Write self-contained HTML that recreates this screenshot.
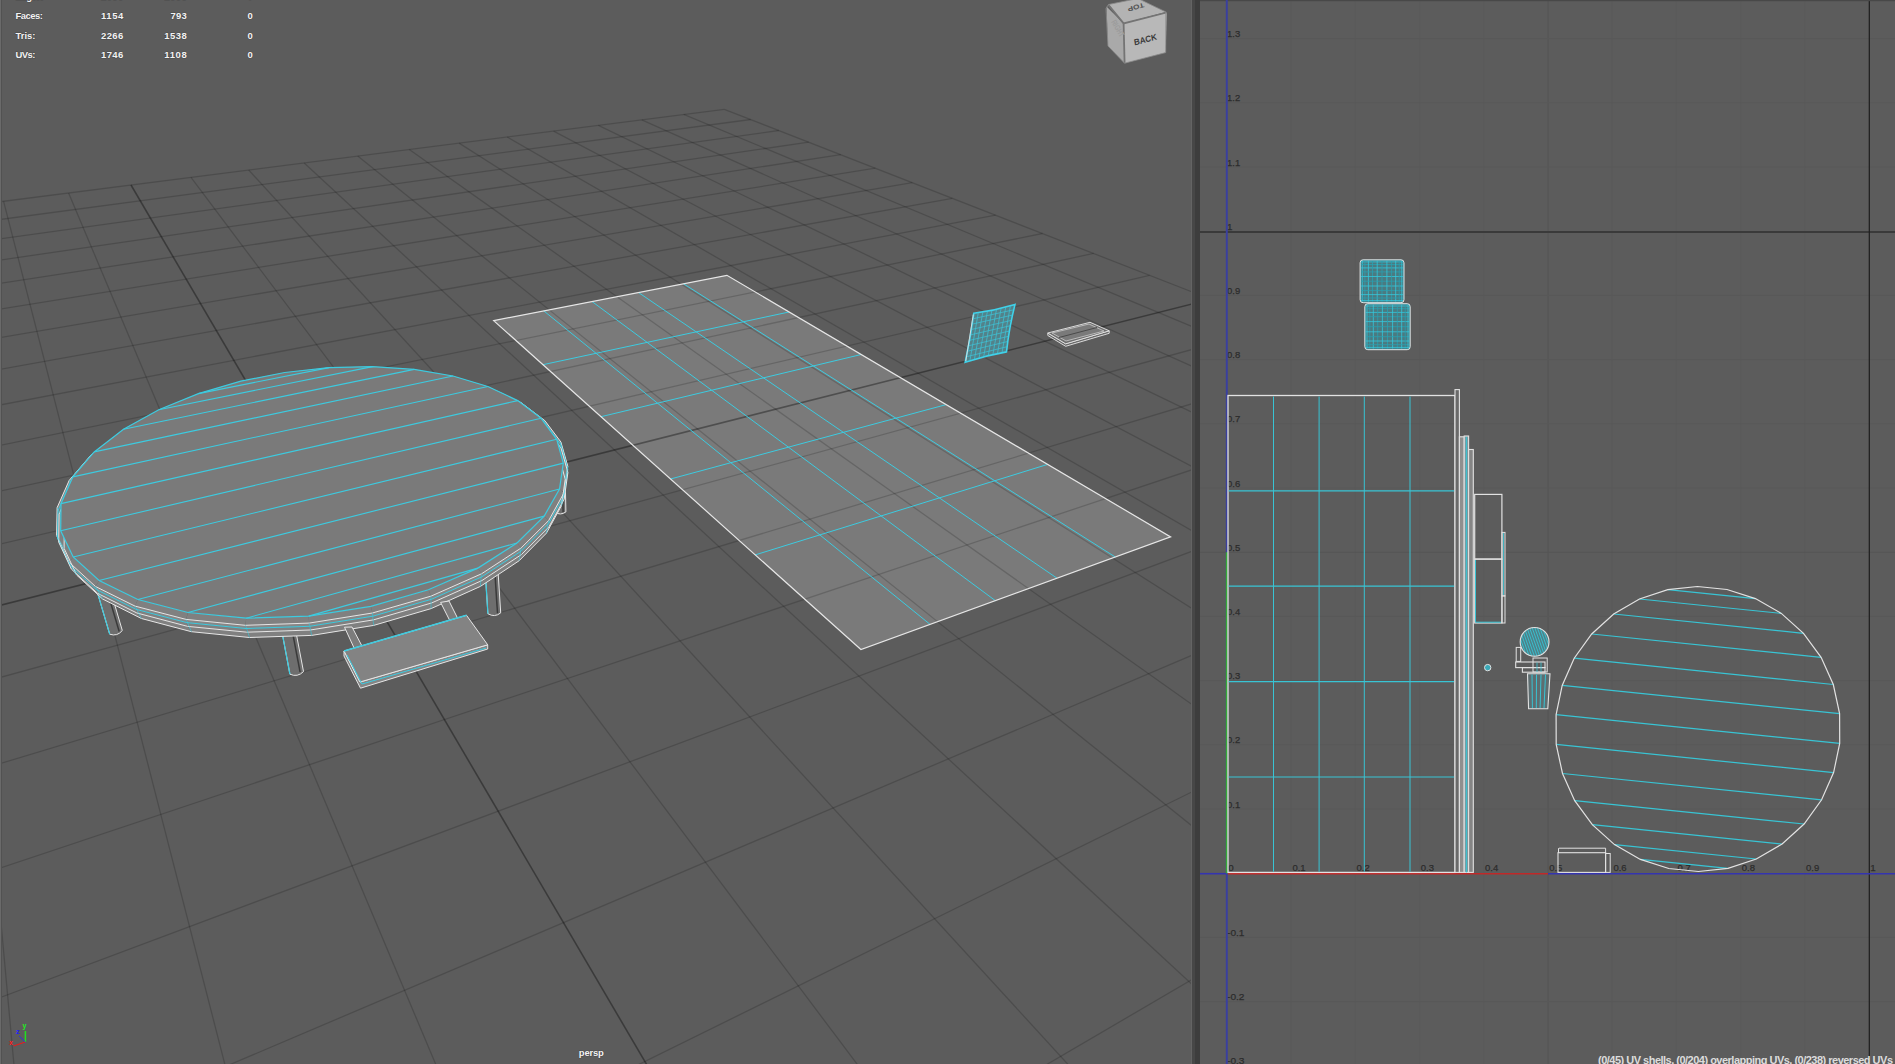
<!DOCTYPE html><html><head><meta charset="utf-8"><style>html,body{margin:0;padding:0;background:#5c5c5c;}body{width:1895px;height:1064px;overflow:hidden;position:relative;}svg{display:block;position:absolute;left:0;top:0;}text{font-family:"Liberation Sans",sans-serif;}</style></head><body>
<svg width="1895" height="1064" viewBox="0 0 1895 1064" shape-rendering="geometricPrecision">
<defs><clipPath id="vp"><rect x="0" y="0" width="1192" height="1064"/></clipPath><clipPath id="uv"><rect x="1200" y="0" width="695" height="1064"/></clipPath></defs>
<rect x="0" y="0" width="1192" height="1064" fill="#5c5c5c"/>
<g clip-path="url(#vp)">
<polygon points="493.7,320.6 726.9,275.3 1170.6,536.9 860.9,649.5" fill="#7a7a7a" stroke="none" stroke-width="1" />
<line x1="724.3" y1="109.3" x2="-831.4" y2="307.9" stroke="rgba(0,0,0,0.17)" stroke-width="1.3" />
<line x1="724.3" y1="109.3" x2="3087.2" y2="1031.9" stroke="rgba(0,0,0,0.17)" stroke-width="1.3" />
<line x1="750.7" y1="119.5" x2="-869.8" y2="335.4" stroke="rgba(0,0,0,0.17)" stroke-width="1.3" />
<line x1="683.7" y1="114.4" x2="3078.1" y2="1113.4" stroke="rgba(0,0,0,0.17)" stroke-width="1.3" />
<line x1="778.8" y1="130.5" x2="-912.5" y2="366.0" stroke="rgba(0,0,0,0.17)" stroke-width="1.3" />
<line x1="641.8" y1="119.8" x2="3067.7" y2="1206.4" stroke="rgba(0,0,0,0.17)" stroke-width="1.3" />
<line x1="808.7" y1="142.2" x2="-960.2" y2="400.1" stroke="rgba(0,0,0,0.17)" stroke-width="1.3" />
<line x1="598.4" y1="125.3" x2="3055.8" y2="1313.5" stroke="rgba(0,0,0,0.17)" stroke-width="1.3" />
<line x1="840.8" y1="154.7" x2="-1013.9" y2="438.5" stroke="rgba(0,0,0,0.17)" stroke-width="1.3" />
<line x1="553.6" y1="131.1" x2="3041.9" y2="1438.1" stroke="rgba(0,0,0,0.17)" stroke-width="1.3" />
<line x1="875.3" y1="168.2" x2="-1074.7" y2="482.1" stroke="rgba(0,0,0,0.17)" stroke-width="1.3" />
<line x1="507.2" y1="137.0" x2="3025.5" y2="1584.9" stroke="rgba(0,0,0,0.17)" stroke-width="1.3" />
<line x1="912.3" y1="182.7" x2="-1144.2" y2="531.9" stroke="rgba(0,0,0,0.17)" stroke-width="1.3" />
<line x1="459.1" y1="143.1" x2="3005.9" y2="1760.4" stroke="rgba(0,0,0,0.17)" stroke-width="1.3" />
<line x1="952.3" y1="198.3" x2="-1224.5" y2="589.3" stroke="rgba(0,0,0,0.17)" stroke-width="1.3" />
<line x1="409.3" y1="149.5" x2="2982.1" y2="1974.0" stroke="rgba(0,0,0,0.17)" stroke-width="1.3" />
<line x1="995.5" y1="215.1" x2="-1318.1" y2="656.4" stroke="rgba(0,0,0,0.17)" stroke-width="1.3" />
<line x1="357.7" y1="156.1" x2="2952.5" y2="2239.4" stroke="rgba(0,0,0,0.17)" stroke-width="1.3" />
<line x1="1042.5" y1="233.5" x2="-1428.9" y2="735.6" stroke="rgba(0,0,0,0.17)" stroke-width="1.3" />
<line x1="304.2" y1="162.9" x2="2914.7" y2="2578.3" stroke="rgba(0,0,0,0.17)" stroke-width="1.3" />
<line x1="1093.6" y1="253.4" x2="-1561.8" y2="830.8" stroke="rgba(0,0,0,0.17)" stroke-width="1.3" />
<line x1="248.7" y1="170.0" x2="2864.8" y2="3025.9" stroke="rgba(0,0,0,0.17)" stroke-width="1.3" />
<line x1="1149.5" y1="275.3" x2="-1724.3" y2="947.2" stroke="rgba(0,0,0,0.17)" stroke-width="1.3" />
<line x1="191.0" y1="177.4" x2="2795.7" y2="3644.8" stroke="rgba(0,0,0,0.17)" stroke-width="1.3" />
<line x1="1210.9" y1="299.2" x2="-1927.6" y2="1092.7" stroke="rgba(0,0,0,0.36)" stroke-width="1.6" />
<line x1="131.0" y1="185.0" x2="2694.0" y2="4556.5" stroke="rgba(0,0,0,0.36)" stroke-width="1.6" />
<line x1="1278.6" y1="325.7" x2="-2189.1" y2="1279.9" stroke="rgba(0,0,0,0.17)" stroke-width="1.3" />
<line x1="68.6" y1="193.0" x2="2529.3" y2="6032.9" stroke="rgba(0,0,0,0.17)" stroke-width="1.3" />
<line x1="1353.6" y1="355.0" x2="-2538.2" y2="1529.8" stroke="rgba(0,0,0,0.17)" stroke-width="1.3" />
<line x1="3.6" y1="201.3" x2="2216.8" y2="8834.1" stroke="rgba(0,0,0,0.17)" stroke-width="1.3" />
<line x1="1437.3" y1="387.7" x2="-3027.5" y2="1880.2" stroke="rgba(0,0,0,0.17)" stroke-width="1.3" />
<line x1="-64.1" y1="210.0" x2="1395.6" y2="16195.2" stroke="rgba(0,0,0,0.17)" stroke-width="1.3" />
<line x1="1531.2" y1="424.3" x2="-3762.9" y2="2406.7" stroke="rgba(0,0,0,0.17)" stroke-width="1.3" />
<line x1="-134.7" y1="219.0" x2="-6608.0" y2="87939.3" stroke="rgba(0,0,0,0.17)" stroke-width="1.3" />
<line x1="1637.3" y1="465.7" x2="-4992.5" y2="3287.0" stroke="rgba(0,0,0,0.17)" stroke-width="1.3" />
<line x1="-208.5" y1="228.4" x2="-37139.6" y2="154773.9" stroke="rgba(0,0,0,0.17)" stroke-width="1.3" />
<line x1="1758.2" y1="512.9" x2="-7466.0" y2="5057.8" stroke="rgba(0,0,0,0.17)" stroke-width="1.3" />
<line x1="-285.5" y1="238.2" x2="-62737.1" y2="154746.9" stroke="rgba(0,0,0,0.17)" stroke-width="1.3" />
<line x1="1897.0" y1="567.1" x2="-15003.9" y2="10454.4" stroke="rgba(0,0,0,0.17)" stroke-width="1.3" />
<line x1="-366.0" y1="248.5" x2="-88334.7" y2="154719.8" stroke="rgba(0,0,0,0.17)" stroke-width="1.3" />
<line x1="2058.3" y1="630.1" x2="-211847.7" y2="154589.3" stroke="rgba(0,0,0,0.17)" stroke-width="1.3" />
<line x1="-450.4" y1="259.3" x2="-113932.2" y2="154692.7" stroke="rgba(0,0,0,0.17)" stroke-width="1.3" />
<line x1="2247.8" y1="704.1" x2="-162402.4" y2="154641.5" stroke="rgba(0,0,0,0.17)" stroke-width="1.3" />
<line x1="-538.8" y1="270.6" x2="-139529.8" y2="154665.7" stroke="rgba(0,0,0,0.17)" stroke-width="1.3" />
<line x1="2473.8" y1="792.4" x2="-112957.2" y2="154693.8" stroke="rgba(0,0,0,0.17)" stroke-width="1.3" />
<line x1="-631.5" y1="282.4" x2="-165127.3" y2="154638.6" stroke="rgba(0,0,0,0.17)" stroke-width="1.3" />
<line x1="2747.9" y1="899.4" x2="-63511.9" y2="154746.0" stroke="rgba(0,0,0,0.17)" stroke-width="1.3" />
<line x1="-729.0" y1="294.9" x2="-190724.8" y2="154611.6" stroke="rgba(0,0,0,0.17)" stroke-width="1.3" />
<line x1="3087.2" y1="1031.9" x2="-14066.7" y2="154798.3" stroke="rgba(0,0,0,0.17)" stroke-width="1.3" />
<line x1="-831.4" y1="307.9" x2="-216322.4" y2="154584.5" stroke="rgba(0,0,0,0.17)" stroke-width="1.3" />
<line x1="543.8" y1="310.9" x2="930.1" y2="624.4" stroke="#3ccbe0" stroke-width="1" />
<line x1="542.9" y1="364.7" x2="789.0" y2="312.0" stroke="#3ccbe0" stroke-width="1" />
<line x1="592.0" y1="301.5" x2="995.3" y2="600.6" stroke="#3ccbe0" stroke-width="1" />
<line x1="601.0" y1="416.7" x2="861.2" y2="354.5" stroke="#3ccbe0" stroke-width="1" />
<line x1="638.5" y1="292.5" x2="1057.0" y2="578.2" stroke="#3ccbe0" stroke-width="1" />
<line x1="670.5" y1="479.0" x2="946.2" y2="404.6" stroke="#3ccbe0" stroke-width="1" />
<line x1="683.5" y1="283.8" x2="1115.3" y2="557.0" stroke="#3ccbe0" stroke-width="1" />
<line x1="755.2" y1="554.9" x2="1047.6" y2="464.4" stroke="#3ccbe0" stroke-width="1" />
<polygon points="493.7,320.6 726.9,275.3 1170.6,536.9 860.9,649.5" fill="none" stroke="#e6e6e6" stroke-width="1.2" />
<path d="M295.5,629.6 L303.5,671.6 Q297.6,677.6 289.9,674.2 L282.0,632.1 Z" fill="#6e6e6e" stroke="#e6e6e6" stroke-width="1"/>
<line x1="282.0" y1="632.1" x2="289.9" y2="674.2" stroke="#3ccbe0" stroke-width="1.2" />
<line x1="292.1" y1="630.2" x2="300.1" y2="672.2" stroke="#3a3a3a" stroke-width="1.5" />
<path d="M110.2,589.4 L122.3,630.5 Q117.3,636.8 109.7,634.2 L97.6,593.2 Z" fill="#6e6e6e" stroke="#e6e6e6" stroke-width="1"/>
<line x1="97.6" y1="593.2" x2="109.7" y2="634.2" stroke="#3ccbe0" stroke-width="1.2" />
<line x1="107.0" y1="590.4" x2="119.2" y2="631.5" stroke="#3a3a3a" stroke-width="1.5" />
<path d="M84.6,492.8 L95.8,531.2 Q91.4,536.7 84.7,534.4 L73.5,496.1 Z" fill="#6e6e6e" stroke="#e6e6e6" stroke-width="1"/>
<line x1="73.5" y1="496.1" x2="84.7" y2="534.4" stroke="#3ccbe0" stroke-width="1.2" />
<line x1="81.8" y1="493.7" x2="93.0" y2="532.0" stroke="#3a3a3a" stroke-width="1.5" />
<path d="M193.1,412.5 L200.9,448.1 Q196.7,452.8 190.9,450.4 L183.0,414.8 Z" fill="#6e6e6e" stroke="#e6e6e6" stroke-width="1"/>
<line x1="183.0" y1="414.8" x2="190.9" y2="450.4" stroke="#3ccbe0" stroke-width="1.2" />
<line x1="190.6" y1="413.1" x2="198.4" y2="448.7" stroke="#3a3a3a" stroke-width="1.5" />
<path d="M351.7,380.4 L356.2,414.8 Q351.8,418.8 346.5,416.1 L342.0,381.7 Z" fill="#6e6e6e" stroke="#e6e6e6" stroke-width="1"/>
<line x1="342.0" y1="381.7" x2="346.5" y2="416.1" stroke="#3ccbe0" stroke-width="1.2" />
<line x1="349.2" y1="380.7" x2="353.8" y2="415.1" stroke="#3a3a3a" stroke-width="1.5" />
<path d="M495.3,402.1 L497.3,437.3 Q492.5,441.1 487.2,437.8 L485.2,402.7 Z" fill="#6e6e6e" stroke="#e6e6e6" stroke-width="1"/>
<line x1="485.2" y1="402.7" x2="487.2" y2="437.8" stroke="#3ccbe0" stroke-width="1.2" />
<line x1="492.8" y1="402.2" x2="494.8" y2="437.4" stroke="#3a3a3a" stroke-width="1.5" />
<path d="M565.1,474.2 L565.9,511.9 Q560.4,515.9 554.7,512.1 L553.9,474.5 Z" fill="#6e6e6e" stroke="#e6e6e6" stroke-width="1"/>
<line x1="553.9" y1="474.5" x2="554.7" y2="512.1" stroke="#3ccbe0" stroke-width="1.2" />
<line x1="562.3" y1="474.3" x2="563.1" y2="511.9" stroke="#3a3a3a" stroke-width="1.5" />
<path d="M498.1,572.3 L500.7,612.9 Q494.6,617.8 487.9,613.7 L485.3,573.1 Z" fill="#6e6e6e" stroke="#e6e6e6" stroke-width="1"/>
<line x1="485.3" y1="573.1" x2="487.9" y2="613.7" stroke="#3ccbe0" stroke-width="1.2" />
<line x1="494.9" y1="572.5" x2="497.5" y2="613.1" stroke="#3a3a3a" stroke-width="1.5" />
<polygon points="370.8,606.3 308.7,616.1 309.1,623.1 372.4,613.0" fill="#808080" stroke="none" stroke-width="1" />
<polygon points="308.7,616.1 246.2,618.2 245.4,625.3 309.1,623.1" fill="#808080" stroke="none" stroke-width="1" />
<polygon points="246.2,618.2 188.0,612.5 186.0,619.4 245.4,625.3" fill="#808080" stroke="none" stroke-width="1" />
<polygon points="188.0,612.5 137.9,599.5 135.0,606.1 186.0,619.4" fill="#808080" stroke="none" stroke-width="1" />
<polygon points="137.9,599.5 99.1,580.5 95.5,586.5 135.0,606.1" fill="#808080" stroke="none" stroke-width="1" />
<polygon points="99.1,580.5 73.2,557.0 69.2,562.4 95.5,586.5" fill="#808080" stroke="none" stroke-width="1" />
<polygon points="73.2,557.0 60.7,530.8 56.6,535.5 69.2,562.4" fill="#808080" stroke="none" stroke-width="1" />
<polygon points="60.7,530.8 61.0,503.6 57.1,507.7 56.6,535.5" fill="#808080" stroke="none" stroke-width="1" />
<polygon points="61.0,503.6 72.8,476.9 69.2,480.4 57.1,507.7" fill="#808080" stroke="none" stroke-width="1" />
<polygon points="72.8,476.9 94.2,451.9 91.1,454.9 69.2,480.4" fill="#808080" stroke="none" stroke-width="1" />
<polygon points="94.2,451.9 123.5,429.3 120.9,431.8 91.1,454.9" fill="#808080" stroke="none" stroke-width="1" />
<polygon points="123.5,429.3 158.8,409.8 156.8,411.9 120.9,431.8" fill="#808080" stroke="none" stroke-width="1" />
<polygon points="158.8,409.8 198.4,393.6 197.0,395.5 156.8,411.9" fill="#808080" stroke="none" stroke-width="1" />
<polygon points="198.4,393.6 240.8,381.2 240.1,382.8 197.0,395.5" fill="#808080" stroke="none" stroke-width="1" />
<polygon points="240.8,381.2 284.7,372.5 284.7,374.0 240.1,382.8" fill="#808080" stroke="none" stroke-width="1" />
<polygon points="284.7,372.5 329.0,367.6 329.5,369.0 284.7,374.0" fill="#808080" stroke="none" stroke-width="1" />
<polygon points="329.0,367.6 372.5,366.6 373.6,368.0 329.5,369.0" fill="#808080" stroke="none" stroke-width="1" />
<polygon points="372.5,366.6 414.2,369.4 415.9,370.8 373.6,368.0" fill="#808080" stroke="none" stroke-width="1" />
<polygon points="414.2,369.4 453.0,376.0 455.3,377.6 415.9,370.8" fill="#808080" stroke="none" stroke-width="1" />
<polygon points="453.0,376.0 487.9,386.5 490.7,388.2 455.3,377.6" fill="#808080" stroke="none" stroke-width="1" />
<polygon points="487.9,386.5 517.7,400.6 521.0,402.6 490.7,388.2" fill="#808080" stroke="none" stroke-width="1" />
<polygon points="517.7,400.6 541.1,418.3 544.9,420.7 521.0,402.6" fill="#808080" stroke="none" stroke-width="1" />
<polygon points="541.1,418.3 556.7,439.3 560.9,442.0 544.9,420.7" fill="#808080" stroke="none" stroke-width="1" />
<polygon points="556.7,439.3 563.3,463.1 567.8,466.3 560.9,442.0" fill="#808080" stroke="none" stroke-width="1" />
<polygon points="563.3,463.1 559.5,489.0 564.0,492.8 567.8,466.3" fill="#808080" stroke="none" stroke-width="1" />
<polygon points="559.5,489.0 544.2,516.1 548.7,520.5 564.0,492.8" fill="#808080" stroke="none" stroke-width="1" />
<polygon points="544.2,516.1 517.0,543.0 521.1,548.0 548.7,520.5" fill="#808080" stroke="none" stroke-width="1" />
<polygon points="517.0,543.0 477.9,568.1 481.5,573.8 521.1,548.0" fill="#808080" stroke="none" stroke-width="1" />
<polygon points="477.9,568.1 428.4,589.8 431.1,596.1 481.5,573.8" fill="#808080" stroke="none" stroke-width="1" />
<polygon points="428.4,589.8 370.8,606.3 372.4,613.0 431.1,596.1" fill="#808080" stroke="none" stroke-width="1" />
<polygon points="372.4,613.0 309.1,623.1 309.6,626.3 372.9,616.2" fill="#878787" stroke="none" stroke-width="1" />
<polygon points="309.1,623.1 245.4,625.3 246.1,628.5 309.6,626.3" fill="#878787" stroke="none" stroke-width="1" />
<polygon points="245.4,625.3 186.0,619.4 186.8,622.6 246.1,628.5" fill="#878787" stroke="none" stroke-width="1" />
<polygon points="186.0,619.4 135.0,606.1 135.9,609.3 186.8,622.6" fill="#878787" stroke="none" stroke-width="1" />
<polygon points="135.0,606.1 95.5,586.5 96.4,589.6 135.9,609.3" fill="#878787" stroke="none" stroke-width="1" />
<polygon points="95.5,586.5 69.2,562.4 70.2,565.5 96.4,589.6" fill="#878787" stroke="none" stroke-width="1" />
<polygon points="69.2,562.4 56.6,535.5 57.6,538.6 70.2,565.5" fill="#878787" stroke="none" stroke-width="1" />
<polygon points="56.6,535.5 57.1,507.7 58.0,510.7 57.6,538.6" fill="#878787" stroke="none" stroke-width="1" />
<polygon points="57.1,507.7 69.2,480.4 70.0,483.3 58.0,510.7" fill="#878787" stroke="none" stroke-width="1" />
<polygon points="69.2,480.4 91.1,454.9 91.9,457.7 70.0,483.3" fill="#878787" stroke="none" stroke-width="1" />
<polygon points="91.1,454.9 120.9,431.8 121.6,434.6 91.9,457.7" fill="#878787" stroke="none" stroke-width="1" />
<polygon points="120.9,431.8 156.8,411.9 157.5,414.6 121.6,434.6" fill="#878787" stroke="none" stroke-width="1" />
<polygon points="156.8,411.9 197.0,395.5 197.6,398.2 157.5,414.6" fill="#878787" stroke="none" stroke-width="1" />
<polygon points="197.0,395.5 240.1,382.8 240.6,385.5 197.6,398.2" fill="#878787" stroke="none" stroke-width="1" />
<polygon points="240.1,382.8 284.7,374.0 285.1,376.6 240.6,385.5" fill="#878787" stroke="none" stroke-width="1" />
<polygon points="284.7,374.0 329.5,369.0 329.9,371.6 285.1,376.6" fill="#878787" stroke="none" stroke-width="1" />
<polygon points="329.5,369.0 373.6,368.0 373.9,370.5 329.9,371.6" fill="#878787" stroke="none" stroke-width="1" />
<polygon points="373.6,368.0 415.9,370.8 416.1,373.4 373.9,370.5" fill="#878787" stroke="none" stroke-width="1" />
<polygon points="415.9,370.8 455.3,377.6 455.5,380.2 416.1,373.4" fill="#878787" stroke="none" stroke-width="1" />
<polygon points="455.3,377.6 490.7,388.2 490.9,390.8 455.5,380.2" fill="#878787" stroke="none" stroke-width="1" />
<polygon points="490.7,388.2 521.0,402.6 521.1,405.3 490.9,390.8" fill="#878787" stroke="none" stroke-width="1" />
<polygon points="521.0,402.6 544.9,420.7 545.0,423.4 521.1,405.3" fill="#878787" stroke="none" stroke-width="1" />
<polygon points="544.9,420.7 560.9,442.0 561.0,444.8 545.0,423.4" fill="#878787" stroke="none" stroke-width="1" />
<polygon points="560.9,442.0 567.8,466.3 567.8,469.2 561.0,444.8" fill="#878787" stroke="none" stroke-width="1" />
<polygon points="567.8,466.3 564.0,492.8 564.1,495.7 567.8,469.2" fill="#878787" stroke="none" stroke-width="1" />
<polygon points="564.0,492.8 548.7,520.5 548.8,523.4 564.1,495.7" fill="#878787" stroke="none" stroke-width="1" />
<polygon points="548.7,520.5 521.1,548.0 521.2,551.1 548.8,523.4" fill="#878787" stroke="none" stroke-width="1" />
<polygon points="521.1,548.0 481.5,573.8 481.7,576.9 521.2,551.1" fill="#878787" stroke="none" stroke-width="1" />
<polygon points="481.5,573.8 431.1,596.1 431.4,599.3 481.7,576.9" fill="#878787" stroke="none" stroke-width="1" />
<polygon points="431.1,596.1 372.4,613.0 372.9,616.2 431.4,599.3" fill="#878787" stroke="none" stroke-width="1" />
<polygon points="372.9,616.2 309.6,626.3 310.3,630.0 373.4,619.9" fill="#808080" stroke="none" stroke-width="1" />
<polygon points="309.6,626.3 246.1,628.5 246.9,632.2 310.3,630.0" fill="#808080" stroke="none" stroke-width="1" />
<polygon points="246.1,628.5 186.8,622.6 187.7,626.4 246.9,632.2" fill="#808080" stroke="none" stroke-width="1" />
<polygon points="186.8,622.6 135.9,609.3 136.9,613.0 187.7,626.4" fill="#808080" stroke="none" stroke-width="1" />
<polygon points="135.9,609.3 96.4,589.6 97.5,593.3 136.9,613.0" fill="#808080" stroke="none" stroke-width="1" />
<polygon points="96.4,589.6 70.2,565.5 71.3,569.0 97.5,593.3" fill="#808080" stroke="none" stroke-width="1" />
<polygon points="70.2,565.5 57.6,538.6 58.7,542.1 71.3,569.0" fill="#808080" stroke="none" stroke-width="1" />
<polygon points="57.6,538.6 58.0,510.7 59.1,514.1 58.7,542.1" fill="#808080" stroke="none" stroke-width="1" />
<polygon points="58.0,510.7 70.0,483.3 71.0,486.7 59.1,514.1" fill="#808080" stroke="none" stroke-width="1" />
<polygon points="70.0,483.3 91.9,457.7 92.8,461.0 71.0,486.7" fill="#808080" stroke="none" stroke-width="1" />
<polygon points="91.9,457.7 121.6,434.6 122.5,437.8 92.8,461.0" fill="#808080" stroke="none" stroke-width="1" />
<polygon points="121.6,434.6 157.5,414.6 158.2,417.8 122.5,437.8" fill="#808080" stroke="none" stroke-width="1" />
<polygon points="157.5,414.6 197.6,398.2 198.3,401.3 158.2,417.8" fill="#808080" stroke="none" stroke-width="1" />
<polygon points="197.6,398.2 240.6,385.5 241.2,388.5 198.3,401.3" fill="#808080" stroke="none" stroke-width="1" />
<polygon points="240.6,385.5 285.1,376.6 285.6,379.6 241.2,388.5" fill="#808080" stroke="none" stroke-width="1" />
<polygon points="285.1,376.6 329.9,371.6 330.3,374.6 285.6,379.6" fill="#808080" stroke="none" stroke-width="1" />
<polygon points="329.9,371.6 373.9,370.5 374.3,373.5 330.3,374.6" fill="#808080" stroke="none" stroke-width="1" />
<polygon points="373.9,370.5 416.1,373.4 416.4,376.4 374.3,373.5" fill="#808080" stroke="none" stroke-width="1" />
<polygon points="416.1,373.4 455.5,380.2 455.7,383.2 416.4,376.4" fill="#808080" stroke="none" stroke-width="1" />
<polygon points="455.5,380.2 490.9,390.8 491.1,393.9 455.7,383.2" fill="#808080" stroke="none" stroke-width="1" />
<polygon points="490.9,390.8 521.1,405.3 521.3,408.4 491.1,393.9" fill="#808080" stroke="none" stroke-width="1" />
<polygon points="521.1,405.3 545.0,423.4 545.0,426.6 521.3,408.4" fill="#808080" stroke="none" stroke-width="1" />
<polygon points="545.0,423.4 561.0,444.8 561.0,448.1 545.0,426.6" fill="#808080" stroke="none" stroke-width="1" />
<polygon points="561.0,444.8 567.8,469.2 567.9,472.5 561.0,448.1" fill="#808080" stroke="none" stroke-width="1" />
<polygon points="567.8,469.2 564.1,495.7 564.2,499.1 567.9,472.5" fill="#808080" stroke="none" stroke-width="1" />
<polygon points="564.1,495.7 548.8,523.4 548.9,526.9 564.2,499.1" fill="#808080" stroke="none" stroke-width="1" />
<polygon points="548.8,523.4 521.2,551.1 521.4,554.6 548.9,526.9" fill="#808080" stroke="none" stroke-width="1" />
<polygon points="521.2,551.1 481.7,576.9 482.0,580.5 521.4,554.6" fill="#808080" stroke="none" stroke-width="1" />
<polygon points="481.7,576.9 431.4,599.3 431.8,602.9 482.0,580.5" fill="#808080" stroke="none" stroke-width="1" />
<polygon points="431.4,599.3 372.9,616.2 373.4,619.9 431.8,602.9" fill="#808080" stroke="none" stroke-width="1" />
<polygon points="373.4,619.9 310.3,630.0 311.7,635.4 373.7,625.4" fill="#808080" stroke="none" stroke-width="1" />
<polygon points="310.3,630.0 246.9,632.2 249.5,637.5 311.7,635.4" fill="#808080" stroke="none" stroke-width="1" />
<polygon points="246.9,632.2 187.7,626.4 191.4,631.7 249.5,637.5" fill="#808080" stroke="none" stroke-width="1" />
<polygon points="187.7,626.4 136.9,613.0 141.4,618.5 191.4,631.7" fill="#808080" stroke="none" stroke-width="1" />
<polygon points="136.9,613.0 97.5,593.3 102.6,599.0 141.4,618.5" fill="#808080" stroke="none" stroke-width="1" />
<polygon points="97.5,593.3 71.3,569.0 76.6,575.0 102.6,599.0" fill="#808080" stroke="none" stroke-width="1" />
<polygon points="71.3,569.0 58.7,542.1 64.1,548.3 76.6,575.0" fill="#808080" stroke="none" stroke-width="1" />
<polygon points="58.7,542.1 59.1,514.1 64.3,520.6 64.1,548.3" fill="#808080" stroke="none" stroke-width="1" />
<polygon points="59.1,514.1 71.0,486.7 75.8,493.3 64.3,520.6" fill="#808080" stroke="none" stroke-width="1" />
<polygon points="71.0,486.7 92.8,461.0 97.1,467.7 75.8,493.3" fill="#808080" stroke="none" stroke-width="1" />
<polygon points="92.8,461.0 122.5,437.8 126.2,444.6 97.1,467.7" fill="#808080" stroke="none" stroke-width="1" />
<polygon points="122.5,437.8 158.2,417.8 161.4,424.7 126.2,444.6" fill="#808080" stroke="none" stroke-width="1" />
<polygon points="158.2,417.8 198.3,401.3 200.8,408.2 161.4,424.7" fill="#808080" stroke="none" stroke-width="1" />
<polygon points="198.3,401.3 241.2,388.5 243.1,395.5 200.8,408.2" fill="#808080" stroke="none" stroke-width="1" />
<polygon points="241.2,388.5 285.6,379.6 286.9,386.6 243.1,395.5" fill="#808080" stroke="none" stroke-width="1" />
<polygon points="285.6,379.6 330.3,374.6 331.1,381.6 286.9,386.6" fill="#808080" stroke="none" stroke-width="1" />
<polygon points="330.3,374.6 374.3,373.5 374.5,380.5 331.1,381.6" fill="#808080" stroke="none" stroke-width="1" />
<polygon points="374.3,373.5 416.4,376.4 416.1,383.4 374.5,380.5" fill="#808080" stroke="none" stroke-width="1" />
<polygon points="416.4,376.4 455.7,383.2 454.9,390.2 416.1,383.4" fill="#808080" stroke="none" stroke-width="1" />
<polygon points="455.7,383.2 491.1,393.9 489.8,400.9 454.9,390.2" fill="#808080" stroke="none" stroke-width="1" />
<polygon points="491.1,393.9 521.3,408.4 519.5,415.3 489.8,400.9" fill="#808080" stroke="none" stroke-width="1" />
<polygon points="521.3,408.4 545.0,426.6 542.9,433.4 519.5,415.3" fill="#808080" stroke="none" stroke-width="1" />
<polygon points="545.0,426.6 561.0,448.1 558.6,454.9 542.9,433.4" fill="#808080" stroke="none" stroke-width="1" />
<polygon points="561.0,448.1 567.9,472.5 565.2,479.2 558.6,454.9" fill="#808080" stroke="none" stroke-width="1" />
<polygon points="567.9,472.5 564.2,499.1 561.5,505.6 565.2,479.2" fill="#808080" stroke="none" stroke-width="1" />
<polygon points="564.2,499.1 548.9,526.9 546.4,533.2 561.5,505.6" fill="#808080" stroke="none" stroke-width="1" />
<polygon points="548.9,526.9 521.4,554.6 519.2,560.7 546.4,533.2" fill="#808080" stroke="none" stroke-width="1" />
<polygon points="521.4,554.6 482.0,580.5 480.4,586.4 519.2,560.7" fill="#808080" stroke="none" stroke-width="1" />
<polygon points="482.0,580.5 431.8,602.9 431.1,608.6 480.4,586.4" fill="#808080" stroke="none" stroke-width="1" />
<polygon points="431.8,602.9 373.4,619.9 373.7,625.4 431.1,608.6" fill="#808080" stroke="none" stroke-width="1" />
<polygon points="372.4,613.0 309.1,623.1 245.4,625.3 186.0,619.4 135.0,606.1 95.5,586.5 69.2,562.4 56.6,535.5 57.1,507.7 69.2,480.4 91.1,454.9 120.9,431.8 156.8,411.9 197.0,395.5 240.1,382.8 284.7,374.0 329.5,369.0 373.6,368.0 415.9,370.8 455.3,377.6 490.7,388.2 521.0,402.6 544.9,420.7 560.9,442.0 567.8,466.3 564.0,492.8 548.7,520.5 521.1,548.0 481.5,573.8 431.1,596.1" fill="none" stroke="#e6e6e6" stroke-width="1"/>
<polygon points="372.9,616.2 309.6,626.3 246.1,628.5 186.8,622.6 135.9,609.3 96.4,589.6 70.2,565.5 57.6,538.6 58.0,510.7 70.0,483.3 91.9,457.7 121.6,434.6 157.5,414.6 197.6,398.2 240.6,385.5 285.1,376.6 329.9,371.6 373.9,370.5 416.1,373.4 455.5,380.2 490.9,390.8 521.1,405.3 545.0,423.4 561.0,444.8 567.8,469.2 564.1,495.7 548.8,523.4 521.2,551.1 481.7,576.9 431.4,599.3" fill="none" stroke="#3ccbe0" stroke-width="1"/>
<polygon points="373.4,619.9 310.3,630.0 246.9,632.2 187.7,626.4 136.9,613.0 97.5,593.3 71.3,569.0 58.7,542.1 59.1,514.1 71.0,486.7 92.8,461.0 122.5,437.8 158.2,417.8 198.3,401.3 241.2,388.5 285.6,379.6 330.3,374.6 374.3,373.5 416.4,376.4 455.7,383.2 491.1,393.9 521.3,408.4 545.0,426.6 561.0,448.1 567.9,472.5 564.2,499.1 548.9,526.9 521.4,554.6 482.0,580.5 431.8,602.9" fill="none" stroke="#e6e6e6" stroke-width="1"/>
<polygon points="373.7,625.4 311.7,635.4 249.5,637.5 191.4,631.7 141.4,618.5 102.6,599.0 76.6,575.0 64.1,548.3 64.3,520.6 75.8,493.3 97.1,467.7 126.2,444.6 161.4,424.7 200.8,408.2 243.1,395.5 286.9,386.6 331.1,381.6 374.5,380.5 416.1,383.4 454.9,390.2 489.8,400.9 519.5,415.3 542.9,433.4 558.6,454.9 565.2,479.2 561.5,505.6 546.4,533.2 519.2,560.7 480.4,586.4 431.1,608.6" fill="none" stroke="#e6e6e6" stroke-width="1"/>
<line x1="372.4" y1="613.0" x2="373.7" y2="625.4" stroke="rgba(60,203,224,0.6)" stroke-width="1" />
<line x1="309.1" y1="623.1" x2="311.7" y2="635.4" stroke="rgba(60,203,224,0.6)" stroke-width="1" />
<line x1="245.4" y1="625.3" x2="249.5" y2="637.5" stroke="rgba(60,203,224,0.6)" stroke-width="1" />
<line x1="186.0" y1="619.4" x2="191.4" y2="631.7" stroke="rgba(60,203,224,0.6)" stroke-width="1" />
<line x1="135.0" y1="606.1" x2="141.4" y2="618.5" stroke="rgba(60,203,224,0.6)" stroke-width="1" />
<line x1="95.5" y1="586.5" x2="102.6" y2="599.0" stroke="rgba(60,203,224,0.6)" stroke-width="1" />
<line x1="69.2" y1="562.4" x2="76.6" y2="575.0" stroke="rgba(60,203,224,0.6)" stroke-width="1" />
<line x1="56.6" y1="535.5" x2="64.1" y2="548.3" stroke="rgba(60,203,224,0.6)" stroke-width="1" />
<line x1="57.1" y1="507.7" x2="64.3" y2="520.6" stroke="rgba(60,203,224,0.6)" stroke-width="1" />
<line x1="69.2" y1="480.4" x2="75.8" y2="493.3" stroke="rgba(60,203,224,0.6)" stroke-width="1" />
<line x1="91.1" y1="454.9" x2="97.1" y2="467.7" stroke="rgba(60,203,224,0.6)" stroke-width="1" />
<line x1="120.9" y1="431.8" x2="126.2" y2="444.6" stroke="rgba(60,203,224,0.6)" stroke-width="1" />
<line x1="156.8" y1="411.9" x2="161.4" y2="424.7" stroke="rgba(60,203,224,0.6)" stroke-width="1" />
<line x1="197.0" y1="395.5" x2="200.8" y2="408.2" stroke="rgba(60,203,224,0.6)" stroke-width="1" />
<line x1="240.1" y1="382.8" x2="243.1" y2="395.5" stroke="rgba(60,203,224,0.6)" stroke-width="1" />
<line x1="284.7" y1="374.0" x2="286.9" y2="386.6" stroke="rgba(60,203,224,0.6)" stroke-width="1" />
<line x1="329.5" y1="369.0" x2="331.1" y2="381.6" stroke="rgba(60,203,224,0.6)" stroke-width="1" />
<line x1="373.6" y1="368.0" x2="374.5" y2="380.5" stroke="rgba(60,203,224,0.6)" stroke-width="1" />
<line x1="415.9" y1="370.8" x2="416.1" y2="383.4" stroke="rgba(60,203,224,0.6)" stroke-width="1" />
<line x1="455.3" y1="377.6" x2="454.9" y2="390.2" stroke="rgba(60,203,224,0.6)" stroke-width="1" />
<line x1="490.7" y1="388.2" x2="489.8" y2="400.9" stroke="rgba(60,203,224,0.6)" stroke-width="1" />
<line x1="521.0" y1="402.6" x2="519.5" y2="415.3" stroke="rgba(60,203,224,0.6)" stroke-width="1" />
<line x1="544.9" y1="420.7" x2="542.9" y2="433.4" stroke="rgba(60,203,224,0.6)" stroke-width="1" />
<line x1="560.9" y1="442.0" x2="558.6" y2="454.9" stroke="rgba(60,203,224,0.6)" stroke-width="1" />
<line x1="567.8" y1="466.3" x2="565.2" y2="479.2" stroke="rgba(60,203,224,0.6)" stroke-width="1" />
<line x1="564.0" y1="492.8" x2="561.5" y2="505.6" stroke="rgba(60,203,224,0.6)" stroke-width="1" />
<line x1="548.7" y1="520.5" x2="546.4" y2="533.2" stroke="rgba(60,203,224,0.6)" stroke-width="1" />
<line x1="521.1" y1="548.0" x2="519.2" y2="560.7" stroke="rgba(60,203,224,0.6)" stroke-width="1" />
<line x1="481.5" y1="573.8" x2="480.4" y2="586.4" stroke="rgba(60,203,224,0.6)" stroke-width="1" />
<line x1="431.1" y1="596.1" x2="431.1" y2="608.6" stroke="rgba(60,203,224,0.6)" stroke-width="1" />
<polygon points="370.8,606.3 308.7,616.1 246.2,618.2 188.0,612.5 137.9,599.5 99.1,580.5 73.2,557.0 60.7,530.8 61.0,503.6 72.8,476.9 94.2,451.9 123.5,429.3 158.8,409.8 198.4,393.6 240.8,381.2 284.7,372.5 329.0,367.6 372.5,366.6 414.2,369.4 453.0,376.0 487.9,386.5 517.7,400.6 541.1,418.3 556.7,439.3 563.3,463.1 559.5,489.0 544.2,516.1 517.0,543.0 477.9,568.1 428.4,589.8" fill="#7a7a7a" stroke="#3ccbe0" stroke-width="1.2" />
<line x1="308.7" y1="616.1" x2="477.9" y2="568.1" stroke="#3ccbe0" stroke-width="1.1" />
<line x1="246.2" y1="618.2" x2="517.0" y2="543.0" stroke="#3ccbe0" stroke-width="1.1" />
<line x1="188.0" y1="612.5" x2="544.2" y2="516.1" stroke="#3ccbe0" stroke-width="1.1" />
<line x1="137.9" y1="599.5" x2="559.5" y2="489.0" stroke="#3ccbe0" stroke-width="1.1" />
<line x1="99.1" y1="580.5" x2="563.3" y2="463.1" stroke="#3ccbe0" stroke-width="1.1" />
<line x1="73.2" y1="557.0" x2="556.7" y2="439.3" stroke="#3ccbe0" stroke-width="1.1" />
<line x1="60.7" y1="530.8" x2="541.1" y2="418.3" stroke="#3ccbe0" stroke-width="1.1" />
<line x1="61.0" y1="503.6" x2="517.7" y2="400.6" stroke="#3ccbe0" stroke-width="1.1" />
<line x1="72.8" y1="476.9" x2="487.9" y2="386.5" stroke="#3ccbe0" stroke-width="1.1" />
<line x1="94.2" y1="451.9" x2="453.0" y2="376.0" stroke="#3ccbe0" stroke-width="1.1" />
<line x1="123.5" y1="429.3" x2="414.2" y2="369.4" stroke="#3ccbe0" stroke-width="1.1" />
<line x1="158.8" y1="409.8" x2="372.5" y2="366.6" stroke="#3ccbe0" stroke-width="1.1" />
<line x1="198.4" y1="393.6" x2="329.0" y2="367.6" stroke="#3ccbe0" stroke-width="1.1" />
<polygon points="344.5,627.2 352.0,627.0 363.0,648.0 355.0,650.0" fill="#7c7c7c" stroke="#e6e6e6" stroke-width="1" />
<polygon points="440.6,602.4 449.0,601.0 459.0,621.0 451.0,623.0" fill="#7c7c7c" stroke="#e6e6e6" stroke-width="1" />
<polygon points="344.0,651.0 344.0,656.0 360.5,688.2 487.7,649.0 487.7,644.8 360.0,682.0" fill="#858585" stroke="#e6e6e6" stroke-width="1" />
<polygon points="344.0,651.0 466.5,615.3 487.7,644.8 360.0,682.0" fill="#838383" stroke="#e6e6e6" stroke-width="1" />
<line x1="344.0" y1="651.0" x2="466.5" y2="615.3" stroke="#3ccbe0" stroke-width="1.5" />
<line x1="347.0" y1="655.0" x2="362.0" y2="684.0" stroke="#3ccbe0" stroke-width="1" />
<line x1="362.0" y1="684.0" x2="486.0" y2="648.0" stroke="#3ccbe0" stroke-width="1" />
<path d="M973.8,313.3 Q994.5,310.5 1015,304.4 Q1009,328.5 1006.5,351.9 Q986,355.5 965.2,362.2 Q970.5,338 973.8,313.3 Z" fill="#52828a"/>
<line x1="978.2" y1="313.3" x2="970.0" y2="360.1" stroke="#3cc6da" stroke-width="0.7" />
<line x1="973.7" y1="318.6" x2="1013.2" y2="309.9" stroke="#3cc6da" stroke-width="0.7" />
<line x1="982.8" y1="312.3" x2="974.5" y2="358.9" stroke="#3cc6da" stroke-width="0.7" />
<line x1="972.7" y1="324.0" x2="1012.3" y2="315.1" stroke="#3cc6da" stroke-width="0.7" />
<line x1="987.4" y1="311.3" x2="979.1" y2="357.8" stroke="#3cc6da" stroke-width="0.7" />
<line x1="971.8" y1="329.4" x2="1011.3" y2="320.4" stroke="#3cc6da" stroke-width="0.7" />
<line x1="991.9" y1="310.3" x2="983.7" y2="356.7" stroke="#3cc6da" stroke-width="0.7" />
<line x1="970.8" y1="334.8" x2="1010.4" y2="325.7" stroke="#3cc6da" stroke-width="0.7" />
<line x1="996.5" y1="309.3" x2="988.3" y2="355.5" stroke="#3cc6da" stroke-width="0.7" />
<line x1="969.8" y1="340.3" x2="1009.5" y2="331.0" stroke="#3cc6da" stroke-width="0.7" />
<line x1="1001.1" y1="308.3" x2="992.9" y2="354.4" stroke="#3cc6da" stroke-width="0.7" />
<line x1="968.9" y1="345.7" x2="1008.5" y2="336.3" stroke="#3cc6da" stroke-width="0.7" />
<line x1="1005.7" y1="307.3" x2="997.5" y2="353.2" stroke="#3cc6da" stroke-width="0.7" />
<line x1="967.9" y1="351.1" x2="1007.6" y2="341.5" stroke="#3cc6da" stroke-width="0.7" />
<line x1="1010.3" y1="306.3" x2="1002.1" y2="352.1" stroke="#3cc6da" stroke-width="0.7" />
<line x1="967.0" y1="356.6" x2="1006.6" y2="346.8" stroke="#3cc6da" stroke-width="0.7" />
<path d="M973.8,313.3 Q994.5,310.5 1015,304.4 Q1009,328.5 1006.5,351.9 Q986,355.5 965.2,362.2 Q970.5,338 973.8,313.3 Z" fill="none" stroke="#3fd2ea" stroke-width="1.6"/>
<line x1="973.3" y1="314.5" x2="965.8" y2="361.0" stroke="#e0e0e0" stroke-width="0.9" />
<polygon points="1047.8,333.0 1047.8,335.5 1065.7,346.3 1109.2,333.3 1109.2,330.8 1065.7,343.8" fill="#6a6a6a" stroke="#e6e6e6" stroke-width="0.9" />
<polygon points="1047.8,333.0 1090.0,322.3 1109.2,330.8 1065.7,343.8" fill="#6e6e6e" stroke="#e6e6e6" stroke-width="0.9" />
<polygon points="1052.0,333.0 1089.0,324.0 1104.0,331.0 1066.0,341.0" fill="#7a7a7a" stroke="#d8d8d8" stroke-width="0.7" />
<line x1="1059.0" y1="337.5" x2="1097.0" y2="327.5" stroke="#4a4a4a" stroke-width="1" />
</g>
<polygon points="1106.5,6.5 1123.6,23.4 1124.6,63.2 1108.0,46.0" fill="#a9a9a9" stroke="none" stroke-width="1" />
<polygon points="1123.6,23.4 1166.7,12.5 1165.7,52.6 1124.6,63.2" fill="#b8b8b8" stroke="none" stroke-width="1" />
<polygon points="1108.5,4.5 1138.0,-1.5 1165.8,11.9 1123.4,23.3" fill="#b3b3b3" stroke="none" stroke-width="1" />
<polyline points="1108.2,4.6 1123.6,23.4 1166.7,12.5" fill="none" stroke="#747474" stroke-width="1.8" />
<line x1="1123.6" y1="23.4" x2="1124.6" y2="63.2" stroke="#747474" stroke-width="1.8" />
<polygon points="1106.0,8.6 1108.5,4.5 1138.0,-1.5 1165.8,11.9 1165.7,52.6 1124.6,63.2 1108.0,46.0" fill="none" stroke="#8a8a8a" stroke-width="0.8" />
<text x="0" y="0" font-size="8.6" font-weight="bold" fill="#3a3a3a" transform="translate(1134.5,45.5) rotate(-15) skewX(-6)" textLength="23.5" lengthAdjust="spacingAndGlyphs">BACK</text>
<text x="0" y="0" font-size="6.5" font-weight="bold" fill="#505050" transform="translate(1143.5,2.8) rotate(165)" textLength="17" lengthAdjust="spacingAndGlyphs">TOP</text>
<text x="0" y="0" font-size="8" font-weight="bold" fill="#9c9c9c" transform="translate(1111,22) rotate(60)" textLength="18" lengthAdjust="spacingAndGlyphs">RIGHT</text>
<text x="15.5" y="0.3" font-size="9.5" font-weight="bold" fill="#f2f2f2" text-anchor="start" letter-spacing="0" style="paint-order:stroke" stroke="rgba(40,40,40,0.35)" stroke-width="1.2" textLength="28" lengthAdjust="spacing">Edges:</text>
<text x="101" y="0.3" font-size="9.5" font-weight="bold" fill="#f2f2f2" text-anchor="start" letter-spacing="0" style="paint-order:stroke" stroke="rgba(40,40,40,0.35)" stroke-width="1.2" textLength="22.3" lengthAdjust="spacing">2385</text>
<text x="164.3" y="0.3" font-size="9.5" font-weight="bold" fill="#f2f2f2" text-anchor="start" letter-spacing="0" style="paint-order:stroke" stroke="rgba(40,40,40,0.35)" stroke-width="1.2" textLength="22.5" lengthAdjust="spacing">1633</text>
<text x="247.5" y="0.3" font-size="9.5" font-weight="bold" fill="#f2f2f2" text-anchor="start" letter-spacing="0" style="paint-order:stroke" stroke="rgba(40,40,40,0.35)" stroke-width="1.2">0</text>
<text x="15.5" y="19.0" font-size="9.5" font-weight="bold" fill="#f2f2f2" text-anchor="start" letter-spacing="0" style="paint-order:stroke" stroke="rgba(40,40,40,0.35)" stroke-width="1.2" textLength="27.3" lengthAdjust="spacing">Faces:</text>
<text x="101" y="19.0" font-size="9.5" font-weight="bold" fill="#f2f2f2" text-anchor="start" letter-spacing="0" style="paint-order:stroke" stroke="rgba(40,40,40,0.35)" stroke-width="1.2" textLength="22.3" lengthAdjust="spacing">1154</text>
<text x="170.60000000000002" y="19.0" font-size="9.5" font-weight="bold" fill="#f2f2f2" text-anchor="start" letter-spacing="0" style="paint-order:stroke" stroke="rgba(40,40,40,0.35)" stroke-width="1.2" textLength="16.2" lengthAdjust="spacing">793</text>
<text x="247.5" y="19.0" font-size="9.5" font-weight="bold" fill="#f2f2f2" text-anchor="start" letter-spacing="0" style="paint-order:stroke" stroke="rgba(40,40,40,0.35)" stroke-width="1.2">0</text>
<text x="15.5" y="38.5" font-size="9.5" font-weight="bold" fill="#f2f2f2" text-anchor="start" letter-spacing="0" style="paint-order:stroke" stroke="rgba(40,40,40,0.35)" stroke-width="1.2" textLength="19.9" lengthAdjust="spacing">Tris:</text>
<text x="101" y="38.5" font-size="9.5" font-weight="bold" fill="#f2f2f2" text-anchor="start" letter-spacing="0" style="paint-order:stroke" stroke="rgba(40,40,40,0.35)" stroke-width="1.2" textLength="22.3" lengthAdjust="spacing">2266</text>
<text x="164.3" y="38.5" font-size="9.5" font-weight="bold" fill="#f2f2f2" text-anchor="start" letter-spacing="0" style="paint-order:stroke" stroke="rgba(40,40,40,0.35)" stroke-width="1.2" textLength="22.5" lengthAdjust="spacing">1538</text>
<text x="247.5" y="38.5" font-size="9.5" font-weight="bold" fill="#f2f2f2" text-anchor="start" letter-spacing="0" style="paint-order:stroke" stroke="rgba(40,40,40,0.35)" stroke-width="1.2">0</text>
<text x="15.5" y="58.0" font-size="9.5" font-weight="bold" fill="#f2f2f2" text-anchor="start" letter-spacing="0" style="paint-order:stroke" stroke="rgba(40,40,40,0.35)" stroke-width="1.2" textLength="19.9" lengthAdjust="spacing">UVs:</text>
<text x="101" y="58.0" font-size="9.5" font-weight="bold" fill="#f2f2f2" text-anchor="start" letter-spacing="0" style="paint-order:stroke" stroke="rgba(40,40,40,0.35)" stroke-width="1.2" textLength="22.3" lengthAdjust="spacing">1746</text>
<text x="164.3" y="58.0" font-size="9.5" font-weight="bold" fill="#f2f2f2" text-anchor="start" letter-spacing="0" style="paint-order:stroke" stroke="rgba(40,40,40,0.35)" stroke-width="1.2" textLength="22.5" lengthAdjust="spacing">1108</text>
<text x="247.5" y="58.0" font-size="9.5" font-weight="bold" fill="#f2f2f2" text-anchor="start" letter-spacing="0" style="paint-order:stroke" stroke="rgba(40,40,40,0.35)" stroke-width="1.2">0</text>
<line x1="25.4" y1="1031.0" x2="25.4" y2="1042.0" stroke="#20e020" stroke-width="1.5" />
<line x1="25.4" y1="1042.0" x2="13.5" y2="1046.0" stroke="#e02020" stroke-width="1.3" />
<line x1="25.4" y1="1042.0" x2="19.0" y2="1036.0" stroke="#3030e0" stroke-width="1" />
<text x="22.5" y="1028" font-size="7" font-weight="bold" fill="#20f020">y</text>
<text x="16" y="1033.5" font-size="7" font-weight="bold" fill="#2020ff">z</text>
<text x="9" y="1044.5" font-size="7" font-weight="bold" fill="#ff2020">x</text>
<text x="591.3" y="1055.9" font-size="9.5" font-weight="bold" fill="#f2f2f2" text-anchor="middle" letter-spacing="0" style="paint-order:stroke" stroke="rgba(40,40,40,0.35)" stroke-width="1.2" textLength="25" lengthAdjust="spacing">persp</text>
<rect x="0" y="0" width="1" height="1064" fill="#6a6a6a"/><rect x="1" y="0" width="1" height="1064" fill="#525252"/>
<rect x="1191" y="0" width="1" height="1064" fill="#646464"/><rect x="1192" y="0" width="8" height="1064" fill="#3d3d3d"/><rect x="1192" y="0" width="3" height="1064" fill="#474747"/>
<rect x="1200" y="0" width="695" height="1064" fill="#5c5c5c"/>
<g clip-path="url(#uv)">
<line x1="1162.8" y1="0.0" x2="1162.8" y2="1064.0" stroke="#5a5a5a" stroke-width="1.2" />
<line x1="1291.2" y1="0.0" x2="1291.2" y2="1064.0" stroke="#5a5a5a" stroke-width="1.2" />
<line x1="1355.4" y1="0.0" x2="1355.4" y2="1064.0" stroke="#5a5a5a" stroke-width="1.2" />
<line x1="1419.6" y1="0.0" x2="1419.6" y2="1064.0" stroke="#5a5a5a" stroke-width="1.2" />
<line x1="1483.8" y1="0.0" x2="1483.8" y2="1064.0" stroke="#5a5a5a" stroke-width="1.2" />
<line x1="1548.0" y1="0.0" x2="1548.0" y2="1064.0" stroke="#555555" stroke-width="1.2" />
<line x1="1612.2" y1="0.0" x2="1612.2" y2="1064.0" stroke="#5a5a5a" stroke-width="1.2" />
<line x1="1676.4" y1="0.0" x2="1676.4" y2="1064.0" stroke="#5a5a5a" stroke-width="1.2" />
<line x1="1740.6" y1="0.0" x2="1740.6" y2="1064.0" stroke="#5a5a5a" stroke-width="1.2" />
<line x1="1804.8" y1="0.0" x2="1804.8" y2="1064.0" stroke="#5a5a5a" stroke-width="1.2" />
<line x1="1933.2" y1="0.0" x2="1933.2" y2="1064.0" stroke="#5a5a5a" stroke-width="1.2" />
<line x1="1200.0" y1="1065.8" x2="1895.0" y2="1065.8" stroke="#585858" stroke-width="1.1" />
<line x1="1200.0" y1="1001.6" x2="1895.0" y2="1001.6" stroke="#585858" stroke-width="1.1" />
<line x1="1200.0" y1="937.4" x2="1895.0" y2="937.4" stroke="#585858" stroke-width="1.1" />
<line x1="1200.0" y1="809.0" x2="1895.0" y2="809.0" stroke="#585858" stroke-width="1.1" />
<line x1="1200.0" y1="744.8" x2="1895.0" y2="744.8" stroke="#585858" stroke-width="1.1" />
<line x1="1200.0" y1="680.6" x2="1895.0" y2="680.6" stroke="#585858" stroke-width="1.1" />
<line x1="1200.0" y1="616.4" x2="1895.0" y2="616.4" stroke="#585858" stroke-width="1.1" />
<line x1="1200.0" y1="552.2" x2="1895.0" y2="552.2" stroke="#555555" stroke-width="1.1" />
<line x1="1200.0" y1="488.0" x2="1895.0" y2="488.0" stroke="#585858" stroke-width="1.1" />
<line x1="1200.0" y1="423.8" x2="1895.0" y2="423.8" stroke="#585858" stroke-width="1.1" />
<line x1="1200.0" y1="359.6" x2="1895.0" y2="359.6" stroke="#585858" stroke-width="1.1" />
<line x1="1200.0" y1="295.4" x2="1895.0" y2="295.4" stroke="#585858" stroke-width="1.1" />
<line x1="1200.0" y1="167.0" x2="1895.0" y2="167.0" stroke="#585858" stroke-width="1.1" />
<line x1="1200.0" y1="102.8" x2="1895.0" y2="102.8" stroke="#585858" stroke-width="1.1" />
<line x1="1200.0" y1="38.6" x2="1895.0" y2="38.6" stroke="#585858" stroke-width="1.1" />
<line x1="1200.0" y1="232.0" x2="1895.0" y2="232.0" stroke="#3a3a3a" stroke-width="2" />
<line x1="1869.3" y1="0.0" x2="1869.3" y2="1058.0" stroke="#1e1e1e" stroke-width="1.2" />
<rect x="1200" y="0" width="695" height="1.2" fill="#484848"/>
<text x="1227.0" y="1064.3" font-size="9.8" fill="#2c2c2c" stroke="#2c2c2c" stroke-width="0.25" textLength="17.5" lengthAdjust="spacingAndGlyphs">-0.3</text>
<text x="1227.0" y="1000.1" font-size="9.8" fill="#2c2c2c" stroke="#2c2c2c" stroke-width="0.25" textLength="17.5" lengthAdjust="spacingAndGlyphs">-0.2</text>
<text x="1227.0" y="935.9" font-size="9.8" fill="#2c2c2c" stroke="#2c2c2c" stroke-width="0.25" textLength="17.5" lengthAdjust="spacingAndGlyphs">-0.1</text>
<text x="1227.0" y="807.5" font-size="9.8" fill="#2c2c2c" stroke="#2c2c2c" stroke-width="0.25" textLength="13.2" lengthAdjust="spacingAndGlyphs">0.1</text>
<text x="1227.0" y="743.3" font-size="9.8" fill="#2c2c2c" stroke="#2c2c2c" stroke-width="0.25" textLength="13.2" lengthAdjust="spacingAndGlyphs">0.2</text>
<text x="1227.0" y="679.1" font-size="9.8" fill="#2c2c2c" stroke="#2c2c2c" stroke-width="0.25" textLength="13.2" lengthAdjust="spacingAndGlyphs">0.3</text>
<text x="1227.0" y="614.9" font-size="9.8" fill="#2c2c2c" stroke="#2c2c2c" stroke-width="0.25" textLength="13.2" lengthAdjust="spacingAndGlyphs">0.4</text>
<text x="1227.0" y="550.7" font-size="9.8" fill="#2c2c2c" stroke="#2c2c2c" stroke-width="0.25" textLength="13.2" lengthAdjust="spacingAndGlyphs">0.5</text>
<text x="1227.0" y="486.5" font-size="9.8" fill="#2c2c2c" stroke="#2c2c2c" stroke-width="0.25" textLength="13.2" lengthAdjust="spacingAndGlyphs">0.6</text>
<text x="1227.0" y="422.3" font-size="9.8" fill="#2c2c2c" stroke="#2c2c2c" stroke-width="0.25" textLength="13.2" lengthAdjust="spacingAndGlyphs">0.7</text>
<text x="1227.0" y="358.1" font-size="9.8" fill="#2c2c2c" stroke="#2c2c2c" stroke-width="0.25" textLength="13.2" lengthAdjust="spacingAndGlyphs">0.8</text>
<text x="1227.0" y="293.9" font-size="9.8" fill="#2c2c2c" stroke="#2c2c2c" stroke-width="0.25" textLength="13.2" lengthAdjust="spacingAndGlyphs">0.9</text>
<text x="1227.0" y="229.7" font-size="9.8" fill="#2c2c2c" stroke="#2c2c2c" stroke-width="0.25">1</text>
<text x="1227.0" y="165.5" font-size="9.8" fill="#2c2c2c" stroke="#2c2c2c" stroke-width="0.25" textLength="13.2" lengthAdjust="spacingAndGlyphs">1.1</text>
<text x="1227.0" y="101.3" font-size="9.8" fill="#2c2c2c" stroke="#2c2c2c" stroke-width="0.25" textLength="13.2" lengthAdjust="spacingAndGlyphs">1.2</text>
<text x="1227.0" y="37.1" font-size="9.8" fill="#2c2c2c" stroke="#2c2c2c" stroke-width="0.25" textLength="13.2" lengthAdjust="spacingAndGlyphs">1.3</text>
<text x="1228.2" y="871.4" font-size="9.8" fill="#2c2c2c" stroke="#2c2c2c" stroke-width="0.25">0</text>
<text x="1292.4" y="871.4" font-size="9.8" fill="#2c2c2c" stroke="#2c2c2c" stroke-width="0.25" textLength="13.2" lengthAdjust="spacingAndGlyphs">0.1</text>
<text x="1356.6" y="871.4" font-size="9.8" fill="#2c2c2c" stroke="#2c2c2c" stroke-width="0.25" textLength="13.2" lengthAdjust="spacingAndGlyphs">0.2</text>
<text x="1420.8" y="871.4" font-size="9.8" fill="#2c2c2c" stroke="#2c2c2c" stroke-width="0.25" textLength="13.2" lengthAdjust="spacingAndGlyphs">0.3</text>
<text x="1485.0" y="871.4" font-size="9.8" fill="#2c2c2c" stroke="#2c2c2c" stroke-width="0.25" textLength="13.2" lengthAdjust="spacingAndGlyphs">0.4</text>
<text x="1549.2" y="871.4" font-size="9.8" fill="#2c2c2c" stroke="#2c2c2c" stroke-width="0.25" textLength="13.2" lengthAdjust="spacingAndGlyphs">0.5</text>
<text x="1613.4" y="871.4" font-size="9.8" fill="#2c2c2c" stroke="#2c2c2c" stroke-width="0.25" textLength="13.2" lengthAdjust="spacingAndGlyphs">0.6</text>
<text x="1677.6" y="871.4" font-size="9.8" fill="#2c2c2c" stroke="#2c2c2c" stroke-width="0.25" textLength="13.2" lengthAdjust="spacingAndGlyphs">0.7</text>
<text x="1741.8" y="871.4" font-size="9.8" fill="#2c2c2c" stroke="#2c2c2c" stroke-width="0.25" textLength="13.2" lengthAdjust="spacingAndGlyphs">0.8</text>
<text x="1806.0" y="871.4" font-size="9.8" fill="#2c2c2c" stroke="#2c2c2c" stroke-width="0.25" textLength="13.2" lengthAdjust="spacingAndGlyphs">0.9</text>
<text x="1870.2" y="871.4" font-size="9.8" fill="#2c2c2c" stroke="#2c2c2c" stroke-width="0.25">1</text>
<line x1="1200.0" y1="873.7" x2="1227.0" y2="873.7" stroke="#3434b0" stroke-width="1.6" />
<line x1="1227.0" y1="873.7" x2="1548.0" y2="873.7" stroke="#c02828" stroke-width="1.6" />
<line x1="1548.0" y1="873.7" x2="1895.0" y2="873.7" stroke="#3434b0" stroke-width="1.6" />
<line x1="1226.8" y1="0.0" x2="1226.8" y2="1064.0" stroke="#3a3f9e" stroke-width="2" />
<line x1="1226.8" y1="552.2" x2="1226.8" y2="873.2" stroke="#36a836" stroke-width="2" />
<rect x="1228" y="395.5" width="227" height="476.9" fill="none" stroke="#e2e2e2" stroke-width="1.3"/>
<line x1="1273.5" y1="396.5" x2="1273.5" y2="871.7" stroke="#38c4d4" stroke-width="1" />
<line x1="1319.1" y1="396.5" x2="1319.1" y2="871.7" stroke="#38c4d4" stroke-width="1" />
<line x1="1364.3" y1="396.5" x2="1364.3" y2="871.7" stroke="#38c4d4" stroke-width="1" />
<line x1="1410.0" y1="396.5" x2="1410.0" y2="871.7" stroke="#38c4d4" stroke-width="1" />
<line x1="1228.7" y1="490.8" x2="1454.3" y2="490.8" stroke="#38c4d4" stroke-width="1.2" />
<line x1="1228.7" y1="586.2" x2="1454.3" y2="586.2" stroke="#38c4d4" stroke-width="1.2" />
<line x1="1228.7" y1="681.6" x2="1454.3" y2="681.6" stroke="#38c4d4" stroke-width="1.2" />
<line x1="1228.7" y1="777.0" x2="1454.3" y2="777.0" stroke="#38c4d4" stroke-width="1.2" />
<rect x="1455.0" y="389.6" width="4.4" height="482.8" fill="#6a6a6a" stroke="#e2e2e2" stroke-width="1.1"/>
<rect x="1459.4" y="436.8" width="4.8" height="435.6" fill="#8f8f8f" stroke="#e2e2e2" stroke-width="1.1"/>
<rect x="1464.2" y="436.0" width="4.4" height="436.4" fill="#7a9aa0" stroke="#e2e2e2" stroke-width="1.1"/>
<rect x="1468.6" y="449.5" width="4.7" height="422.9" fill="#858585" stroke="#e2e2e2" stroke-width="1.1"/>
<line x1="1466.4" y1="437.0" x2="1466.4" y2="872.4" stroke="#38c4d4" stroke-width="1" />
<rect x="1474.7" y="494.4" width="27.2" height="64.7" fill="none" stroke="#e2e2e2" stroke-width="1.2"/>
<rect x="1474.7" y="559.1" width="27.2" height="63.9" fill="none" stroke="#e2e2e2" stroke-width="1.2"/>
<line x1="1475.5" y1="560.0" x2="1475.5" y2="622.0" stroke="#38c4d4" stroke-width="1" />
<line x1="1475.5" y1="622.2" x2="1501.0" y2="622.2" stroke="#38c4d4" stroke-width="1" />
<rect x="1502" y="532.4" width="3" height="63.5" fill="none" stroke="#e2e2e2" stroke-width="1"/>
<rect x="1502" y="595.9" width="3" height="27.1" fill="none" stroke="#e2e2e2" stroke-width="1"/>
<line x1="1503.5" y1="533.0" x2="1503.5" y2="595.0" stroke="#38c4d4" stroke-width="0.8" />
<circle cx="1487.7" cy="667.6" r="3.2" fill="#3aa9b8" stroke="#e2e2e2" stroke-width="1"/>
<clipPath id="c1"><circle cx="1534.6" cy="641.9" r="14.4"/></clipPath>
<circle cx="1534.6" cy="641.9" r="14.4" fill="#4e8088"/>
<g clip-path="url(#c1)">
<line x1="1507.8" y1="625.0" x2="1519.8" y2="659.0" stroke="#38c4d4" stroke-width="0.9" />
<line x1="1510.4" y1="625.0" x2="1522.4" y2="659.0" stroke="#38c4d4" stroke-width="0.9" />
<line x1="1513.0" y1="625.0" x2="1525.0" y2="659.0" stroke="#38c4d4" stroke-width="0.9" />
<line x1="1515.6" y1="625.0" x2="1527.6" y2="659.0" stroke="#38c4d4" stroke-width="0.9" />
<line x1="1518.2" y1="625.0" x2="1530.2" y2="659.0" stroke="#38c4d4" stroke-width="0.9" />
<line x1="1520.8" y1="625.0" x2="1532.8" y2="659.0" stroke="#38c4d4" stroke-width="0.9" />
<line x1="1523.4" y1="625.0" x2="1535.4" y2="659.0" stroke="#38c4d4" stroke-width="0.9" />
<line x1="1526.0" y1="625.0" x2="1538.0" y2="659.0" stroke="#38c4d4" stroke-width="0.9" />
<line x1="1528.6" y1="625.0" x2="1540.6" y2="659.0" stroke="#38c4d4" stroke-width="0.9" />
<line x1="1531.2" y1="625.0" x2="1543.2" y2="659.0" stroke="#38c4d4" stroke-width="0.9" />
<line x1="1533.8" y1="625.0" x2="1545.8" y2="659.0" stroke="#38c4d4" stroke-width="0.9" />
<line x1="1536.4" y1="625.0" x2="1548.4" y2="659.0" stroke="#38c4d4" stroke-width="0.9" />
<line x1="1539.0" y1="625.0" x2="1551.0" y2="659.0" stroke="#38c4d4" stroke-width="0.9" />
<line x1="1541.6" y1="625.0" x2="1553.6" y2="659.0" stroke="#38c4d4" stroke-width="0.9" />
<line x1="1544.2" y1="625.0" x2="1556.2" y2="659.0" stroke="#38c4d4" stroke-width="0.9" />
<line x1="1546.8" y1="625.0" x2="1558.8" y2="659.0" stroke="#38c4d4" stroke-width="0.9" />
<line x1="1549.4" y1="625.0" x2="1561.4" y2="659.0" stroke="#38c4d4" stroke-width="0.9" />
</g>
<circle cx="1534.6" cy="641.9" r="14.4" fill="none" stroke="#e2e2e2" stroke-width="1.1"/>
<rect x="1516.2" y="647.4" width="4.5" height="14" fill="none" stroke="#e2e2e2" stroke-width="1"/>
<rect x="1515.7" y="662" width="29.3" height="5.6" fill="none" stroke="#e2e2e2" stroke-width="1.1"/>
<rect x="1522.4" y="667.6" width="22.6" height="4.6" fill="none" stroke="#e2e2e2" stroke-width="1.1"/>
<rect x="1533" y="658" width="14.2" height="14" fill="none" stroke="#e2e2e2" stroke-width="1"/>
<line x1="1537.0" y1="662.5" x2="1537.0" y2="672.0" stroke="#38c4d4" stroke-width="0.8" />
<line x1="1541.0" y1="662.5" x2="1541.0" y2="672.0" stroke="#38c4d4" stroke-width="0.8" />
<polygon points="1527.5,673.8 1550.0,673.8 1547.8,708.8 1528.6,708.8" fill="#5e6d70" stroke="#e2e2e2" stroke-width="1.1" />
<line x1="1532.0" y1="674.5" x2="1532.4" y2="708.0" stroke="#38c4d4" stroke-width="1" />
<line x1="1536.5" y1="674.5" x2="1536.3" y2="708.0" stroke="#38c4d4" stroke-width="1" />
<line x1="1541.0" y1="674.5" x2="1540.1" y2="708.0" stroke="#38c4d4" stroke-width="1" />
<line x1="1545.5" y1="674.5" x2="1544.0" y2="708.0" stroke="#38c4d4" stroke-width="1" />
<rect x="1360.1" y="259.8" width="43.9" height="42.9" rx="3" fill="#4b7a80"/>
<line x1="1360.7" y1="260.8" x2="1360.7" y2="301.7" stroke="#2a9fb0" stroke-width="0.8" />
<line x1="1361.1" y1="260.3" x2="1403.0" y2="260.3" stroke="#2a9fb0" stroke-width="0.8" />
<line x1="1362.3" y1="260.8" x2="1362.3" y2="301.7" stroke="#33c8dc" stroke-width="0.8" />
<line x1="1361.1" y1="261.9" x2="1403.0" y2="261.9" stroke="#33c8dc" stroke-width="0.8" />
<line x1="1364.9" y1="260.8" x2="1364.9" y2="301.7" stroke="#2a9fb0" stroke-width="0.8" />
<line x1="1361.1" y1="264.5" x2="1403.0" y2="264.5" stroke="#2a9fb0" stroke-width="0.8" />
<line x1="1368.4" y1="260.8" x2="1368.4" y2="301.7" stroke="#33c8dc" stroke-width="0.8" />
<line x1="1361.1" y1="267.9" x2="1403.0" y2="267.9" stroke="#33c8dc" stroke-width="0.8" />
<line x1="1372.5" y1="260.8" x2="1372.5" y2="301.7" stroke="#2a9fb0" stroke-width="0.8" />
<line x1="1361.1" y1="271.9" x2="1403.0" y2="271.9" stroke="#2a9fb0" stroke-width="0.8" />
<line x1="1377.2" y1="260.8" x2="1377.2" y2="301.7" stroke="#33c8dc" stroke-width="0.8" />
<line x1="1361.1" y1="276.5" x2="1403.0" y2="276.5" stroke="#33c8dc" stroke-width="0.8" />
<line x1="1382.0" y1="260.8" x2="1382.0" y2="301.7" stroke="#2a9fb0" stroke-width="0.8" />
<line x1="1361.1" y1="281.2" x2="1403.0" y2="281.2" stroke="#2a9fb0" stroke-width="0.8" />
<line x1="1386.9" y1="260.8" x2="1386.9" y2="301.7" stroke="#33c8dc" stroke-width="0.8" />
<line x1="1361.1" y1="286.0" x2="1403.0" y2="286.0" stroke="#33c8dc" stroke-width="0.8" />
<line x1="1391.6" y1="260.8" x2="1391.6" y2="301.7" stroke="#2a9fb0" stroke-width="0.8" />
<line x1="1361.1" y1="290.6" x2="1403.0" y2="290.6" stroke="#2a9fb0" stroke-width="0.8" />
<line x1="1395.7" y1="260.8" x2="1395.7" y2="301.7" stroke="#33c8dc" stroke-width="0.8" />
<line x1="1361.1" y1="294.6" x2="1403.0" y2="294.6" stroke="#33c8dc" stroke-width="0.8" />
<line x1="1399.2" y1="260.8" x2="1399.2" y2="301.7" stroke="#2a9fb0" stroke-width="0.8" />
<line x1="1361.1" y1="298.0" x2="1403.0" y2="298.0" stroke="#2a9fb0" stroke-width="0.8" />
<line x1="1401.8" y1="260.8" x2="1401.8" y2="301.7" stroke="#33c8dc" stroke-width="0.8" />
<line x1="1361.1" y1="300.6" x2="1403.0" y2="300.6" stroke="#33c8dc" stroke-width="0.8" />
<line x1="1403.4" y1="260.8" x2="1403.4" y2="301.7" stroke="#2a9fb0" stroke-width="0.8" />
<line x1="1361.1" y1="302.2" x2="1403.0" y2="302.2" stroke="#2a9fb0" stroke-width="0.8" />
<rect x="1360.1" y="259.8" width="43.9" height="42.9" rx="3" fill="none" stroke="#e2e2e2" stroke-width="1"/>
<rect x="1364.8" y="303.7" width="45.4" height="46.0" rx="3" fill="#4b7a80"/>
<line x1="1365.4" y1="304.7" x2="1365.4" y2="348.7" stroke="#2a9fb0" stroke-width="0.8" />
<line x1="1365.8" y1="304.3" x2="1409.2" y2="304.3" stroke="#2a9fb0" stroke-width="0.8" />
<line x1="1367.0" y1="304.7" x2="1367.0" y2="348.7" stroke="#33c8dc" stroke-width="0.8" />
<line x1="1365.8" y1="306.0" x2="1409.2" y2="306.0" stroke="#33c8dc" stroke-width="0.8" />
<line x1="1369.8" y1="304.7" x2="1369.8" y2="348.7" stroke="#2a9fb0" stroke-width="0.8" />
<line x1="1365.8" y1="308.7" x2="1409.2" y2="308.7" stroke="#2a9fb0" stroke-width="0.8" />
<line x1="1373.3" y1="304.7" x2="1373.3" y2="348.7" stroke="#33c8dc" stroke-width="0.8" />
<line x1="1365.8" y1="312.4" x2="1409.2" y2="312.4" stroke="#33c8dc" stroke-width="0.8" />
<line x1="1377.7" y1="304.7" x2="1377.7" y2="348.7" stroke="#2a9fb0" stroke-width="0.8" />
<line x1="1365.8" y1="316.7" x2="1409.2" y2="316.7" stroke="#2a9fb0" stroke-width="0.8" />
<line x1="1382.4" y1="304.7" x2="1382.4" y2="348.7" stroke="#33c8dc" stroke-width="0.8" />
<line x1="1365.8" y1="321.6" x2="1409.2" y2="321.6" stroke="#33c8dc" stroke-width="0.8" />
<line x1="1387.5" y1="304.7" x2="1387.5" y2="348.7" stroke="#2a9fb0" stroke-width="0.8" />
<line x1="1365.8" y1="326.7" x2="1409.2" y2="326.7" stroke="#2a9fb0" stroke-width="0.8" />
<line x1="1392.6" y1="304.7" x2="1392.6" y2="348.7" stroke="#33c8dc" stroke-width="0.8" />
<line x1="1365.8" y1="331.8" x2="1409.2" y2="331.8" stroke="#33c8dc" stroke-width="0.8" />
<line x1="1397.3" y1="304.7" x2="1397.3" y2="348.7" stroke="#2a9fb0" stroke-width="0.8" />
<line x1="1365.8" y1="336.7" x2="1409.2" y2="336.7" stroke="#2a9fb0" stroke-width="0.8" />
<line x1="1401.7" y1="304.7" x2="1401.7" y2="348.7" stroke="#33c8dc" stroke-width="0.8" />
<line x1="1365.8" y1="341.0" x2="1409.2" y2="341.0" stroke="#33c8dc" stroke-width="0.8" />
<line x1="1405.2" y1="304.7" x2="1405.2" y2="348.7" stroke="#2a9fb0" stroke-width="0.8" />
<line x1="1365.8" y1="344.7" x2="1409.2" y2="344.7" stroke="#2a9fb0" stroke-width="0.8" />
<line x1="1408.0" y1="304.7" x2="1408.0" y2="348.7" stroke="#33c8dc" stroke-width="0.8" />
<line x1="1365.8" y1="347.4" x2="1409.2" y2="347.4" stroke="#33c8dc" stroke-width="0.8" />
<line x1="1409.6" y1="304.7" x2="1409.6" y2="348.7" stroke="#2a9fb0" stroke-width="0.8" />
<line x1="1365.8" y1="349.1" x2="1409.2" y2="349.1" stroke="#2a9fb0" stroke-width="0.8" />
<rect x="1364.8" y="303.7" width="45.4" height="46.0" rx="3" fill="none" stroke="#e2e2e2" stroke-width="1"/>
<line x1="1640.4" y1="859.4" x2="1728.0" y2="868.3" stroke="#38c4d4" stroke-width="1.2" />
<line x1="1614.5" y1="844.6" x2="1756.3" y2="859.0" stroke="#38c4d4" stroke-width="1.2" />
<line x1="1592.3" y1="824.7" x2="1782.1" y2="844.0" stroke="#38c4d4" stroke-width="1.2" />
<line x1="1574.7" y1="800.7" x2="1804.1" y2="824.0" stroke="#38c4d4" stroke-width="1.2" />
<line x1="1562.5" y1="773.5" x2="1821.6" y2="799.8" stroke="#38c4d4" stroke-width="1.2" />
<line x1="1556.2" y1="744.4" x2="1833.6" y2="772.6" stroke="#38c4d4" stroke-width="1.2" />
<line x1="1556.1" y1="714.6" x2="1839.7" y2="743.4" stroke="#38c4d4" stroke-width="1.2" />
<line x1="1562.2" y1="685.4" x2="1839.6" y2="713.6" stroke="#38c4d4" stroke-width="1.2" />
<line x1="1574.2" y1="658.2" x2="1833.3" y2="684.5" stroke="#38c4d4" stroke-width="1.2" />
<line x1="1591.7" y1="634.0" x2="1821.1" y2="657.3" stroke="#38c4d4" stroke-width="1.2" />
<line x1="1613.7" y1="614.0" x2="1803.5" y2="633.3" stroke="#38c4d4" stroke-width="1.2" />
<line x1="1639.5" y1="599.0" x2="1781.3" y2="613.4" stroke="#38c4d4" stroke-width="1.2" />
<line x1="1667.8" y1="589.7" x2="1755.4" y2="598.6" stroke="#38c4d4" stroke-width="1.2" />
<polygon points="1556.1,714.6 1562.2,685.4 1574.2,658.2 1591.7,634.0 1613.7,614.0 1639.5,599.0 1667.8,589.7 1697.4,586.5 1727.0,589.5 1755.4,598.6 1781.3,613.4 1803.5,633.3 1821.1,657.3 1833.3,684.5 1839.6,713.6 1839.7,743.4 1833.6,772.6 1821.6,799.8 1804.1,824.0 1782.1,844.0 1756.3,859.0 1728.0,868.3 1698.4,871.5 1668.8,868.5 1640.4,859.4 1614.5,844.6 1592.3,824.7 1574.7,800.7 1562.5,773.5 1556.2,744.4" fill="none" stroke="#e2e2e2" stroke-width="1.2" />
<rect x="1558" y="852.7" width="47.6" height="19.7" fill="none" stroke="#e2e2e2" stroke-width="1.1"/>
<line x1="1559.0" y1="848.2" x2="1605.6" y2="848.2" stroke="#e2e2e2" stroke-width="1" />
<line x1="1558.5" y1="848.2" x2="1558.5" y2="853.0" stroke="#e2e2e2" stroke-width="1" />
<line x1="1605.6" y1="848.2" x2="1605.6" y2="853.0" stroke="#e2e2e2" stroke-width="1" />
<rect x="1605.6" y="853.5" width="4.6" height="18.9" fill="none" stroke="#e2e2e2" stroke-width="1"/>
</g>
<text x="1893" y="1064" font-size="11" font-weight="bold" fill="#dcdcdc" text-anchor="end" textLength="295" lengthAdjust="spacing">(0/45) UV shells, (0/204) overlapping UVs, (0/238) reversed UVs</text>
</svg></body></html>
